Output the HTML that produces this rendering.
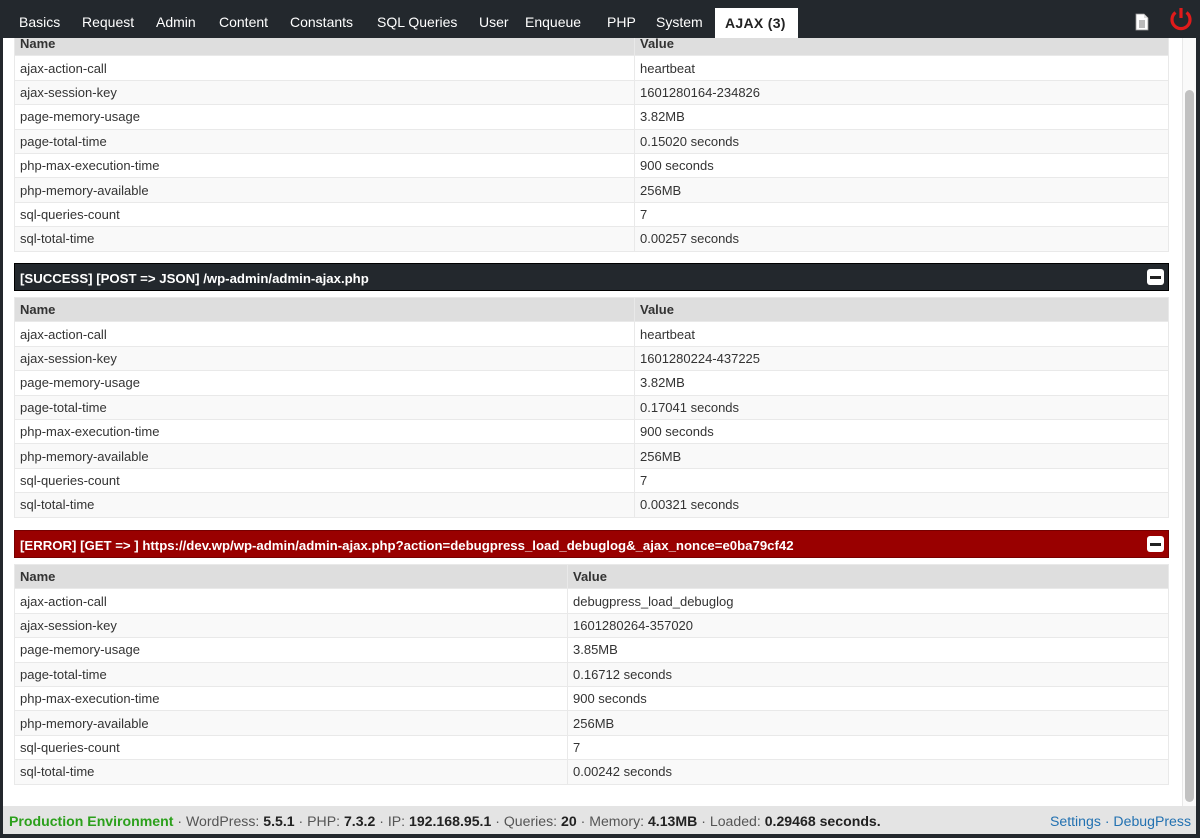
<!DOCTYPE html>
<html><head><meta charset="utf-8"><style>
*{margin:0;padding:0;box-sizing:border-box}
body{width:1200px;height:838px;background:#23282d;font-family:"Liberation Sans",Arial,sans-serif;font-size:13px;color:#333;position:relative;overflow:hidden}
.tab{position:absolute;top:14px;color:#fff;font-size:14px}
.act{position:absolute;left:715px;top:8px;width:83px;height:31px;background:#fff;color:#222;font-size:14px;font-weight:bold;padding:7px 0 0 10px;letter-spacing:0.3px}
#main{position:absolute;left:3px;top:38px;width:1193px;height:768px;background:#fff;overflow:hidden}
#sb{position:absolute;left:1179px;top:0;width:14px;height:768px;background:#fafafa;border-left:1px solid #e8e8e8}
#th{position:absolute;left:1182px;top:52px;width:9px;height:712px;background:#c1c1c1;border-radius:5px}
table{position:absolute;left:11px;width:1155px;border-collapse:collapse}
td{height:24.4px;padding:0 5px;border:1px solid #e9e9e9;vertical-align:middle;white-space:nowrap}
tr.h td{background:#dedede;font-weight:bold;color:#333}
tr:nth-child(odd):not(.h) td{background:#f9f9f9}
.bar{position:absolute;left:11px;width:1155px;height:28px;color:#fff;font-weight:bold;font-size:13.2px;padding:7px 0 0 5px;border:1px solid #000}
.min{position:absolute;right:4px;top:5px;width:17px;height:16px;background:#fff;border-radius:3px}
.min:after{content:"";position:absolute;left:3px;top:7px;width:11px;height:2.5px;background:#222}
#foot{position:absolute;left:3px;top:806px;width:1193px;height:28px;background:#e4e4e4;padding:7px 0 0 6px;font-size:14.1px;color:#555}
#foot b{color:#222;font-weight:bold}
</style></head><body>
<span class="tab" style="left:19px">Basics</span>
<span class="tab" style="left:82px">Request</span>
<span class="tab" style="left:156px">Admin</span>
<span class="tab" style="left:219px">Content</span>
<span class="tab" style="left:290px">Constants</span>
<span class="tab" style="left:377px">SQL Queries</span>
<span class="tab" style="left:479px">User</span>
<span class="tab" style="left:525px">Enqueue</span>
<span class="tab" style="left:607px">PHP</span>
<span class="tab" style="left:656px">System</span>
<div class="act">AJAX (3)</div>
<svg style="position:absolute;left:1135px;top:13px" width="14" height="18" viewBox="0 0 14 18"><path d="M1 1h8l4 4v12H1z" fill="#fff" stroke="#999" stroke-width="0.8"/><path d="M9 1v4h4" fill="#ddd"/><path d="M4 8h6M4 10h6M4 12h6M4 14h6" stroke="#777"/></svg>
<svg style="position:absolute;left:1168px;top:6px" width="26" height="26" viewBox="0 0 26 26"><path d="M7.5 6.5A9 9 0 1 0 18.5 6.5" fill="none" stroke="#e01b1b" stroke-width="3.2"/><path d="M13 2v10" stroke="#e01b1b" stroke-width="3.2"/></svg>
<div id="main">
<table style="top:-7px"><colgroup><col style="width:620px"><col></colgroup>
<tr class="h"><td>Name</td><td>Value</td></tr>
<tr><td>ajax-action-call</td><td>heartbeat</td></tr>
<tr><td>ajax-session-key</td><td>1601280164-234826</td></tr>
<tr><td>page-memory-usage</td><td>3.82MB</td></tr>
<tr><td>page-total-time</td><td>0.15020 seconds</td></tr>
<tr><td>php-max-execution-time</td><td>900 seconds</td></tr>
<tr><td>php-memory-available</td><td>256MB</td></tr>
<tr><td>sql-queries-count</td><td>7</td></tr>
<tr><td>sql-total-time</td><td>0.00257 seconds</td></tr>
</table>
<div class="bar" style="top:225px;background:#23282d">[SUCCESS] [POST =&gt; JSON] /wp-admin/admin-ajax.php<span class="min"></span></div>
<table style="top:259px"><colgroup><col style="width:620px"><col></colgroup>
<tr class="h"><td>Name</td><td>Value</td></tr>
<tr><td>ajax-action-call</td><td>heartbeat</td></tr>
<tr><td>ajax-session-key</td><td>1601280224-437225</td></tr>
<tr><td>page-memory-usage</td><td>3.82MB</td></tr>
<tr><td>page-total-time</td><td>0.17041 seconds</td></tr>
<tr><td>php-max-execution-time</td><td>900 seconds</td></tr>
<tr><td>php-memory-available</td><td>256MB</td></tr>
<tr><td>sql-queries-count</td><td>7</td></tr>
<tr><td>sql-total-time</td><td>0.00321 seconds</td></tr>
</table>
<div class="bar" style="top:492px;background:#990000;border-color:#700">[ERROR] [GET =&gt; ] https://dev.wp/wp-admin/admin-ajax.php?action=debugpress_load_debuglog&amp;_ajax_nonce=e0ba79cf42<span class="min"></span></div>
<table style="top:526px"><colgroup><col style="width:553px"><col></colgroup>
<tr class="h"><td>Name</td><td>Value</td></tr>
<tr><td>ajax-action-call</td><td>debugpress_load_debuglog</td></tr>
<tr><td>ajax-session-key</td><td>1601280264-357020</td></tr>
<tr><td>page-memory-usage</td><td>3.85MB</td></tr>
<tr><td>page-total-time</td><td>0.16712 seconds</td></tr>
<tr><td>php-max-execution-time</td><td>900 seconds</td></tr>
<tr><td>php-memory-available</td><td>256MB</td></tr>
<tr><td>sql-queries-count</td><td>7</td></tr>
<tr><td>sql-total-time</td><td>0.00242 seconds</td></tr>
</table>
<div id="sb"></div><div id="th"></div>
</div>
<div id="foot"><span style="color:#2ca01c;font-weight:bold">Production Environment</span> · WordPress: <b>5.5.1</b> · PHP: <b>7.3.2</b> · IP: <b>192.168.95.1</b> · Queries: <b>20</b> · Memory: <b>4.13MB</b> · Loaded: <b>0.29468 seconds.</b><span style="position:absolute;right:5px;top:7px;color:#2271b1">Settings · DebugPress</span></div>
</body></html>
